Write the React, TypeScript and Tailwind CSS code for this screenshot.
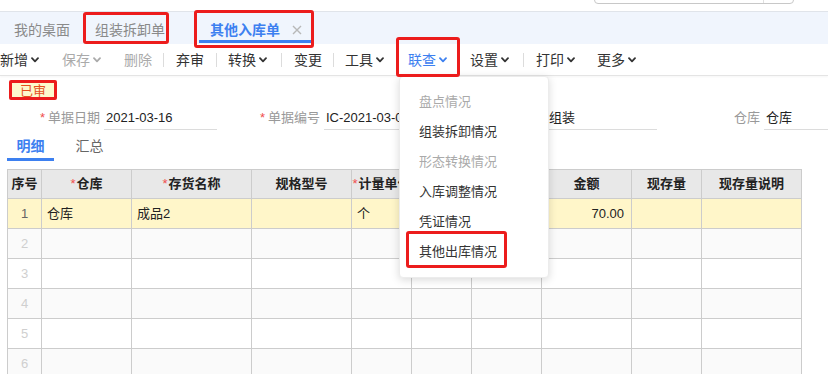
import React from 'react'

const FONT = '[font-family:"Liberation_Sans","Noto_Sans_CJK_SC",sans-serif]'

function Chevron({ className = '' }: { className?: string }) {
  return (
    <svg width="8" height="6" viewBox="0 0 8 6" className={className}>
      <path d="M1 1.2 L4 4.3 L7 1.2" fill="none" stroke="currentColor" strokeWidth="1.8" strokeLinecap="round" strokeLinejoin="round" />
    </svg>
  )
}

type ToolItem = { label?: string; sep?: boolean; ml: string; chevron?: boolean; tone?: 'gray' | 'blue' }

const tools: ToolItem[] = [
  { label: '新增', ml: 'ml-[0px]', chevron: true },
  { label: '保存', ml: 'ml-[23px]', chevron: true, tone: 'gray' },
  { label: '删除', ml: 'ml-[23px]', tone: 'gray' },
  { sep: true, ml: 'ml-[11px]' },
  { label: '弃审', ml: 'ml-[12px]' },
  { sep: true, ml: 'ml-[12px]' },
  { label: '转换', ml: 'ml-[11px]', chevron: true },
  { sep: true, ml: 'ml-[14px]' },
  { label: '变更', ml: 'ml-[12px]' },
  { sep: true, ml: 'ml-[11px]' },
  { label: '工具', ml: 'ml-[11px]', chevron: true },
  { label: '联查', ml: 'ml-[24px]', chevron: true, tone: 'blue' },
  { label: '设置', ml: 'ml-[23px]', chevron: true },
  { sep: true, ml: 'ml-[14px]' },
  { label: '打印', ml: 'ml-[12px]', chevron: true },
  { label: '更多', ml: 'ml-[22px]', chevron: true },
]

const cols = [
  { w: 'w-[34px]', title: '序号' },
  { w: 'w-[90px]', title: '仓库', req: true },
  { w: 'w-[120px]', title: '存货名称', req: true },
  { w: 'w-[100px]', title: '规格型号' },
  { w: 'w-[60px]', title: '计量单位', req: true },
  { w: 'w-[60px]', title: '数量' },
  { w: 'w-[70px]', title: '单价' },
  { w: 'w-[90px]', title: '金额' },
  { w: 'w-[70px]', title: '现存量' },
  { w: 'w-[100px]', title: '现存量说明' },
]

const rowBg = ['bg-[#fff6c9]', 'bg-[#fafafa]', 'bg-white', 'bg-[#fafafa]', 'bg-white', 'bg-[#fafafa]']

const menu = [
  { label: '盘点情况', off: true },
  { label: '组装拆卸情况' },
  { label: '形态转换情况', off: true },
  { label: '入库调整情况' },
  { label: '凭证情况' },
  { label: '其他出库情况' },
]

function Field({ ml, label, req, value, w }: { ml: string; label: string; req?: boolean; value: string; w: string }) {
  return (
    <div className={`flex items-center ${ml}`}>
      <div className="w-[64px] text-right text-[13px] text-[#999] whitespace-nowrap">
        {req && <span className="text-[#f04d4d]">*</span>}
        <span className="ml-[3px]">{label}</span>
      </div>
      <div className={`ml-[4px] ${w} h-[24px] border-b border-[#dcdcdc] flex items-center pl-[2px] text-[13px] text-[#222] whitespace-nowrap overflow-hidden`}>
        {value}
      </div>
    </div>
  )
}

export default function App() {
  return (
    <div className={`relative w-[828px] h-[374px] overflow-hidden bg-white ${FONT}`}>
      {/* ── top strip with search box ── */}
      <div className="h-[12px] overflow-hidden border-b border-[#e0e4ea] bg-white">
        <div className="ml-[594px] -mt-[20px] h-[24px] w-[200px] border border-[#c8c8c8] rounded-[4px] flex">
          <div className="ml-auto w-[30px] border-l border-[#e0e0e0]" />
        </div>
      </div>

      {/* ── page tabs ── */}
      <div className="h-[32px] bg-[#f0f5fd] flex items-start text-[14px]">
        <div className="ml-[14px] pt-[8px] leading-[20px] text-[#8a8a8a]">我的桌面</div>
        <div className="ml-[25px] pt-[8px] leading-[20px] text-[#8a8a8a]">组装拆卸单</div>
        <div className="ml-[34px] h-[31px] pt-[8px] px-[11px] pr-[9px] flex items-start border-b-[3px] border-[#3d80f0]">
          <span className="leading-[20px] font-bold text-[#3d80f0]">其他入库单</span>
          <svg width="10" height="10" viewBox="0 0 10 10" className="ml-[12px] mt-[5px] text-[#b8b8b8]">
            <path d="M1 1 L9 9 M9 1 L1 9" stroke="currentColor" strokeWidth="1.4" />
          </svg>
        </div>
      </div>

      {/* ── toolbar ── */}
      <div className="h-[32px] border-b border-[#e4e4e4] flex items-center text-[14px] text-[#333] shadow-[0_1px_2px_rgba(0,0,0,0.04)]">
        {tools.map((t, i) =>
          t.sep ? (
            <div key={i} className={`${t.ml} w-px h-[14px] bg-[#dcdcdc]`} />
          ) : (
            <div
              key={i}
              className={`${t.ml} flex items-center whitespace-nowrap ${
                t.tone === 'gray' ? 'text-[#aaa]' : t.tone === 'blue' ? 'text-[#3d80f0]' : 'text-[#333]'
              }`}
            >
              <span className="leading-[20px]">{t.label}</span>
              {t.chevron && <Chevron className="ml-[3px]" />}
            </div>
          )
        )}
      </div>

      {/* ── status badge ── */}
      <div className="ml-[9px] mt-[4px] w-[48px] h-[20px] bg-[#fdf9cd] border-[3px] border-[#ec1c1c] rounded-[2px] flex items-center justify-center text-[13px] text-[#e5501e] leading-none">
        已审
      </div>

      {/* ── header fields ── */}
      <div className="mt-[6px] flex">
        <Field ml="ml-[36px]" label="单据日期" req value="2021-03-16" w="w-[113px]" />
        <Field ml="ml-[39px]" label="单据编号" req value="IC-2021-03-0016" w="w-[113px]" />
        <Field ml="ml-[42px]" label="业务类型" req value="组装" w="w-[110px]" />
        <Field ml="ml-[39px]" label="仓库" value="仓库" w="w-[64px]" />
      </div>

      {/* ── detail / summary tabs ── */}
      <div className="flex text-[14px]">
        <div className="ml-[7px] w-[47px] h-[31px] pt-[6px] text-center leading-[20px] font-bold text-[#3d80f0] border-b-[3px] border-[#3d80f0]">
          明细
        </div>
        <div className="ml-[12px] w-[47px] h-[31px] pt-[6px] text-center leading-[20px] text-[#666]">汇总</div>
      </div>

      {/* ── grid ── */}
      <div className="mt-[8px] ml-[7px] w-[795px] border-l border-t border-[#cccccc] text-[13px]">
        <div className="flex h-[29px] bg-[#e8e8e8] border-b border-[#cccccc]">
          {cols.map((c, i) => (
            <div
              key={i}
              className={`${c.w} shrink-0 border-r border-[#cccccc] flex items-center justify-center font-bold text-[#222] whitespace-nowrap overflow-hidden`}
            >
              {c.req && <span className="text-[#f04d4d] font-normal mr-[1px]">*</span>}
              {c.title}
            </div>
          ))}
        </div>
        {rowBg.map((bg, r) => (
          <div key={r} className={`flex h-[30px] border-b border-[#cccccc] ${bg}`}>
            {cols.map((c, i) => (
              <div
                key={i}
                className={`${c.w} shrink-0 border-r border-[#cccccc] flex items-center whitespace-nowrap overflow-hidden ${
                  i === 0 ? 'justify-center' : i === 7 ? 'justify-end pr-[7px]' : 'pl-[5px]'
                } ${i === 0 ? (r === 0 ? 'text-[#666]' : 'text-[#cfcfcf]') : 'text-[#222]'}`}
              >
                {i === 0 && r + 1}
                {r === 0 && i === 1 && '仓库'}
                {r === 0 && i === 2 && '成品2'}
                {r === 0 && i === 4 && '个'}
                {r === 0 && i === 7 && '70.00'}
              </div>
            ))}
          </div>
        ))}
      </div>

      {/* ── 联查 dropdown ── */}
      <div className="absolute left-[399px] top-[76px] w-[150px] py-[10px] bg-white rounded-[4px] border border-[#ececec] shadow-[0_2px_8px_rgba(0,0,0,0.15)] text-[13px]">
        {menu.map((m) => (
          <div key={m.label} className={`h-[30px] pl-[19px] flex items-center ${m.off ? 'text-[#aaa]' : 'text-[#333]'}`}>
            {m.label}
          </div>
        ))}
      </div>

      {/* ── annotation frames ── */}
      <div className="absolute left-[83px] top-[12px] w-[86px] h-[32px] border-[3px] border-[#ec1c1c] rounded-[3px]" />
      <div className="absolute left-[194px] top-[10px] w-[120px] h-[38px] border-[3px] border-[#ec1c1c] rounded-[3px]" />
      <div className="absolute left-[396px] top-[37px] w-[64px] h-[40px] border-[3px] border-[#ec1c1c] rounded-[3px]" />
      <div className="absolute left-[406px] top-[231px] w-[101px] h-[37px] border-[3px] border-[#ec1c1c] rounded-[3px]" />
    </div>
  )
}
